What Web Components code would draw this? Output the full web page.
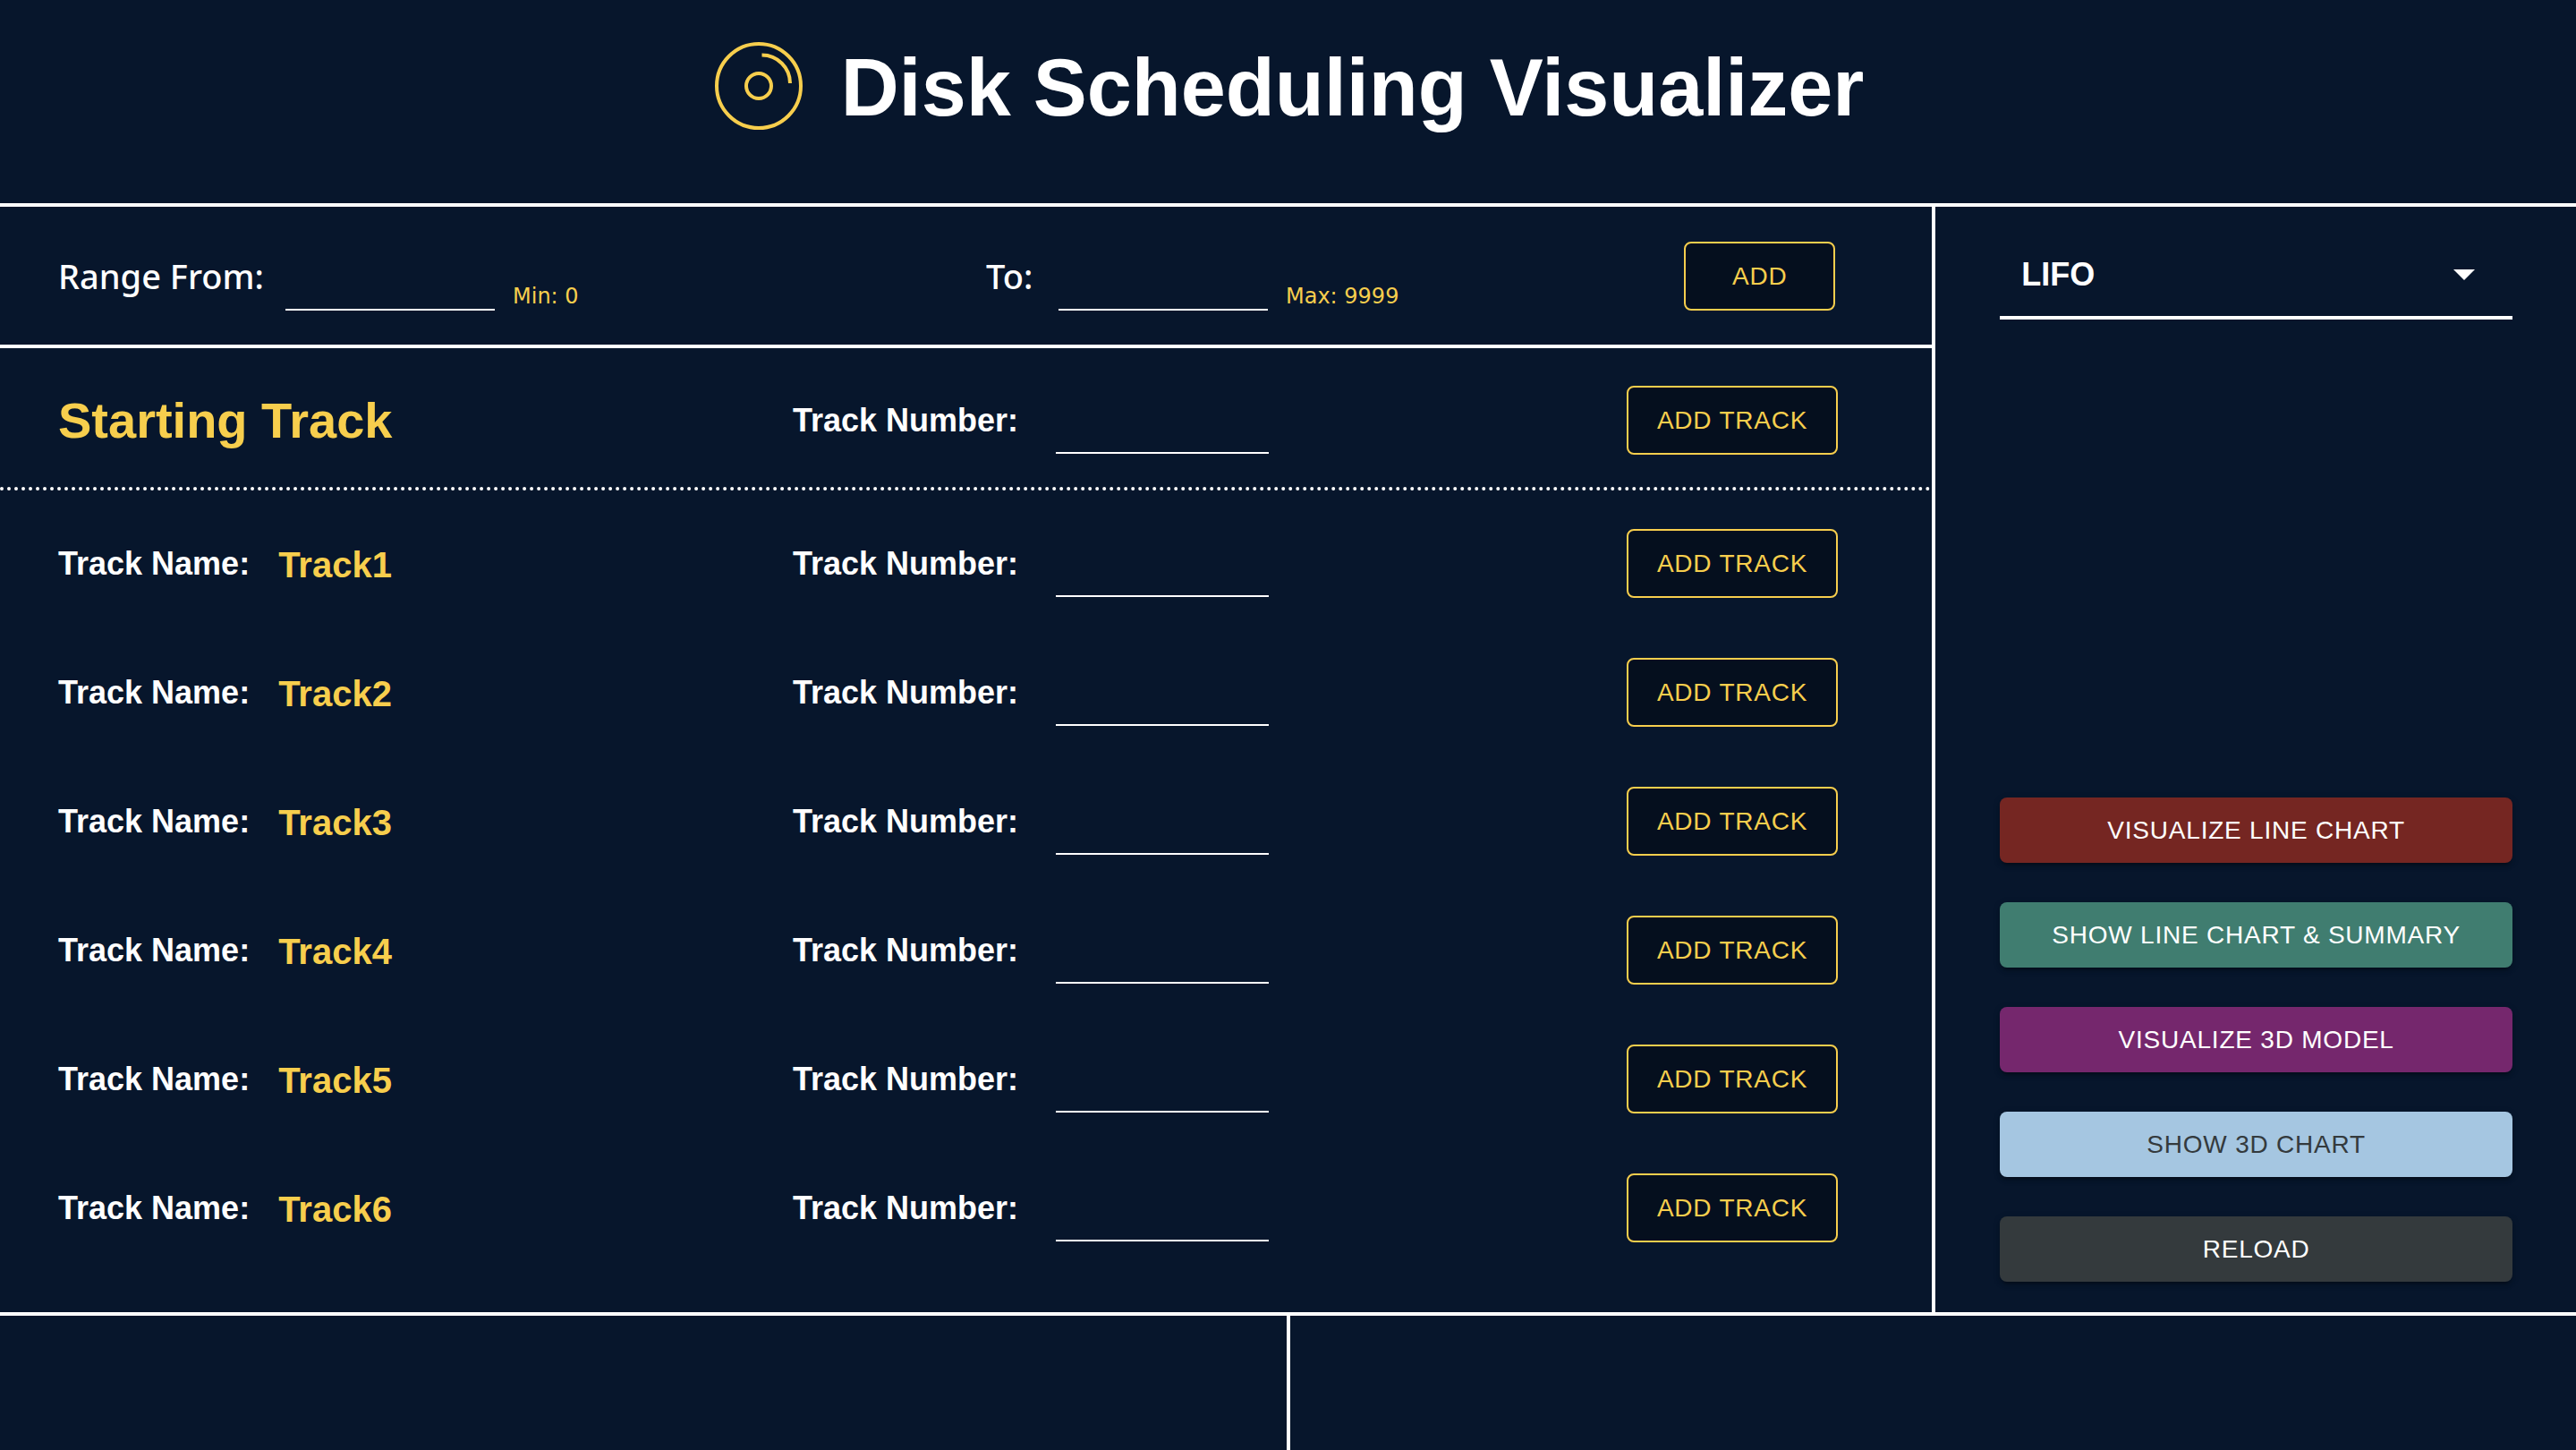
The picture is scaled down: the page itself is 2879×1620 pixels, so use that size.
<!DOCTYPE html>
<html lang="en">
<head>
<meta charset="utf-8">
<title>Disk Scheduling Visualizer</title>
<style>
  :root {
    --bg: #07162c;
    --gold: #f7ce4d;
    --rule: 4px solid #fff;
  }
  html, body { height: 100%; }
  body {
    margin: 0;
    background: var(--bg);
    color: #fff;
    font-family: "Liberation Sans", Helvetica, Arial, sans-serif;
  }
</style>
</head>
<body>
<disk-app></disk-app>
<script>
const define = (name, html, setup) => customElements.define(name, class extends HTMLElement {
  constructor() {
    super();
    this.attachShadow({ mode: 'open' });
  }
  connectedCallback() {
    if (this.shadowRoot.childNodes.length) return;
    const t = document.createElement('template');
    t.innerHTML = `<style>*{box-sizing:border-box}</style>` + html;
    this.shadowRoot.append(t.content.cloneNode(true));
    if (setup) setup(this, this.shadowRoot);
  }
});

define('app-header', `
  <style>
    :host { display: flex; justify-content: center; align-items: flex-start; gap: 40px; height: 231px; padding-top: 44px; border-bottom: var(--rule); box-sizing: border-box; }
    svg { display: block; width: 104px; height: 104px; flex: none; }
    h1 { margin: 0; font-size: 90px; line-height: 108px; font-weight: 700; white-space: nowrap; }
  </style>
  <svg viewBox="0 0 104 104" fill="none" stroke="#f7ce4d" stroke-width="4" aria-hidden="true">
    <circle cx="52" cy="52" r="47"/>
    <circle cx="52" cy="52" r="14"/>
    <path d="M55.500 17.500A31.500 31.500 0 0 1 87 49"/>
  </svg>
  <h1><slot></slot></h1>
`);

define('outline-button', `
  <style>
    :host { display: block; }
    button {
      display: block; font: 400 28px/49px "Liberation Sans", Helvetica, Arial, sans-serif; letter-spacing: 0.028em;
      padding: 12px 32px; border: 2px solid var(--gold); border-radius: 8px;
      background: #050f1e; color: var(--gold); white-space: nowrap; min-width: 169px; text-transform: uppercase;
    }
  </style>
  <button type="button"><slot></slot></button>
`);

define('action-button', `
  <style>
    :host { display: block; }
    button {
      display: block; width: 100%; font: 400 28px/49px "Liberation Sans", Helvetica, Arial, sans-serif; letter-spacing: 0.028em;
      padding: 12px 32px; border: 0; border-radius: 8px; background: var(--fill); color: var(--ink, #fff);
      box-shadow: 0 6px 2px -4px rgba(0,0,0,.2), 0 4px 4px rgba(0,0,0,.14), 0 2px 10px rgba(0,0,0,.12);
      white-space: nowrap; text-transform: uppercase;
    }
  </style>
  <button type="button"><slot></slot></button>
`);

define('range-field', `
  <style>
    :host { display: flex; align-items: flex-end; gap: 20px; height: 78px; }
    label { min-width: var(--label-width); font: 500 38px/78px "Lucida Grande", "Noto Sans", sans-serif; white-space: nowrap; }
    input { width: 234px; height: 78px; padding: 0; border: 0; border-bottom: 2px solid #fff; background: transparent; color: #fff; font: 36px "Liberation Sans", sans-serif; outline: 0; }
    span { font: 24px/32px "Lucida Grande", "DejaVu Sans", sans-serif; color: var(--gold); white-space: nowrap; }
  </style>
  <label for="f"></label><input id="f" type="text"><span></span>
`, (el, r) => {
  r.querySelector('label').textContent = el.getAttribute('label');
  r.querySelector('span').textContent = el.getAttribute('hint');
});

define('range-row', `
  <style>
    :host { display: grid; grid-template-columns: 1037px 1fr auto; align-items: center; height: 158px; padding: 0 108px 0 65px; border-bottom: var(--rule); box-sizing: border-box; }
    .from { --label-width: 234px; }
    .to { --label-width: 61px; }
  </style>
  <range-field class="from" label="Range From:" hint="Min: 0"></range-field>
  <range-field class="to" label="To:" hint="Max: 9999"></range-field>
  <outline-button>Add</outline-button>
`);

define('track-row', `
  <style>
    :host { display: grid; grid-template-columns: 821px 1fr auto; align-items: center; height: 144px; padding: 0 105px 0 65px; box-sizing: border-box; }
    .name { display: flex; align-items: center; gap: 32px; font-size: 36px; line-height: 44px; font-weight: 700; }
    .name strong { color: var(--gold); font-size: 40px; line-height: 48px; padding-top: 2px; }
    h2 { margin: 0; font-size: 56px; line-height: 64px; color: var(--gold); }
    .field { display: flex; align-items: center; gap: 42px; }
    .head, label { padding-top: 2px; }
    label { font-size: 36px; line-height: 44px; font-weight: 700; white-space: nowrap; }
    input { width: 238px; height: 76px; padding: 0; border: 0; border-bottom: 2px solid #fff; background: transparent; color: #fff; font: 36px "Liberation Sans", sans-serif; outline: 0; }
  </style>
  <div class="head"></div>
  <div class="field"><label for="n">Track Number:</label><input id="n" type="text"></div>
  <outline-button>Add Track</outline-button>
`, (el, r) => {
  const head = r.querySelector('.head');
  if (el.hasAttribute('start')) head.innerHTML = '<h2>Starting Track</h2>';
  else {
    head.classList.add('name');
    head.innerHTML = '<span>Track Name:</span><strong></strong>';
    head.querySelector('strong').textContent = el.getAttribute('name');
  }
});

define('track-panel', `
  <style>
    :host { display: flex; flex-direction: column; }
    .start { height: 159px; padding-top: 5px; border-bottom: 4px dotted #fff; }
    .list { padding: 9px 0; }
  </style>
  <range-row></range-row>
  <track-row start class="start"></track-row>
  <div class="list">
    <track-row name="Track1"></track-row>
    <track-row name="Track2"></track-row>
    <track-row name="Track3"></track-row>
    <track-row name="Track4"></track-row>
    <track-row name="Track5"></track-row>
    <track-row name="Track6"></track-row>
  </div>
`);

define('algorithm-select', `
  <style>
    :host { display: flex; align-items: center; border-bottom: var(--rule); }
    select { appearance: none; flex: 1; border: 0; background: transparent; color: #fff; padding: 0 24px; height: 92px; font: 700 36px/44px "Liberation Sans", Helvetica, Arial, sans-serif; outline: 0; }
    svg { width: 24px; height: 12px; flex: none; margin-right: 42px; }
  </style>
  <select aria-label="Algorithm"><option>LIFO</option></select>
  <svg viewBox="0 0 24 12" aria-hidden="true"><path d="M0 0h24L12 12z" fill="#fff"/></svg>
`);

define('side-panel', `
  <style>
    :host { display: flex; flex-direction: column; justify-content: space-between; padding: 30px 71px 34px 72px; border-left: var(--rule); box-sizing: border-box; }
    nav { display: grid; gap: 44px; }
  </style>
  <algorithm-select></algorithm-select>
  <nav>
    <action-button style="--fill:#752622">Visualize Line Chart</action-button>
    <action-button style="--fill:#407d70">Show Line Chart &amp; Summary</action-button>
    <action-button style="--fill:#75276d">Visualize 3D Model</action-button>
    <action-button style="--fill:#a5c6e1;--ink:#343a3d">Show 3D Chart</action-button>
    <action-button style="--fill:#343a3d">Reload</action-button>
  </nav>
`);

define('result-area', `
  <style>
    :host { display: grid; grid-template-columns: 1fr 4px 1fr; border-top: var(--rule); }
    .divider { background: #fff; }
  </style>
  <div></div><div class="divider"></div><div></div>
`);

define('disk-app', `
  <style>
    :host { display: flex; flex-direction: column; min-height: 100vh; }
    main { display: grid; grid-template-columns: 3fr 1fr; }
    side-panel { min-height: 1235px; }
    result-area { flex: 1; }
  </style>
  <app-header>Disk Scheduling Visualizer</app-header>
  <main><track-panel></track-panel><side-panel></side-panel></main>
  <result-area></result-area>
`);
</script>
</body>
</html>
